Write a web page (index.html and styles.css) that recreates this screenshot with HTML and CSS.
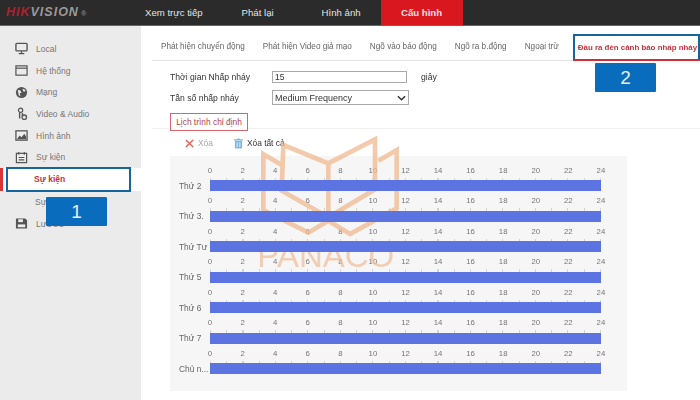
FILE: index.html
```html
<!DOCTYPE html>
<html lang="vi">
<head>
  <meta charset="UTF-8" />
  <title>Cấu hình - Sự kiện</title>
  <link rel="stylesheet" href="styles.css">
</head>
<body>

<div class="page">
  <header class="topbar">
    <div class="logo"><span class="logo-hik">HIK</span><span class="logo-vision">VISION</span><span class="logo-reg">®</span></div>
    <nav class="topnav">
      <a class="topnav-item nav-live">Xem trực tiếp</a>
      <a class="topnav-item nav-play">Phát lại</a>
      <a class="topnav-item nav-image">Hình ảnh</a>
      <a class="topnav-item nav-config active">Cấu hình</a>
    </nav>
  </header>

  <div class="content">
    <aside class="sidebar">
      <div class="side-item">
        <svg class="side-icon" viewBox="0 0 14 14"><rect x="1" y="1.5" width="12" height="8" rx="1" fill="none" stroke="#555" stroke-width="1.5"/><path d="M4 12.5h6M7 10v2" stroke="#555" stroke-width="1.5"/></svg>
        <span>Local</span>
      </div>
      <div class="side-item">
        <svg class="side-icon" viewBox="0 0 14 14"><rect x="1" y="2" width="12" height="10" fill="none" stroke="#555" stroke-width="1.3"/><path d="M1 4.5h12" stroke="#555" stroke-width="1.3"/></svg>
        <span>Hệ thống</span>
      </div>
      <div class="side-item">
        <svg class="side-icon" viewBox="0 0 14 14"><circle cx="7" cy="7" r="6" fill="#555"/><path d="M3 4l3 1 1 2-2 1 1 3-2-1zM8 3l3 1 0 2-2 0z" fill="#eee"/></svg>
        <span>Mạng</span>
      </div>
      <div class="side-item">
        <svg class="side-icon" viewBox="0 0 14 14"><circle cx="6" cy="3.5" r="2.3" fill="none" stroke="#555" stroke-width="1.3"/><path d="M5 6v6.5M8 6.5v3" stroke="#555" stroke-width="1.5"/><circle cx="10" cy="11" r="2.4" fill="none" stroke="#555" stroke-width="1.4"/></svg>
        <span>Video &amp; Audio</span>
      </div>
      <div class="side-item">
        <svg class="side-icon" viewBox="0 0 14 14"><rect x="1" y="2" width="12" height="10" fill="#eee" stroke="#555" stroke-width="1.4"/><path d="M2 11l3-4 2 2 3-4 2 3v3z" fill="#555"/></svg>
        <span>Hình ảnh</span>
      </div>
      <div class="side-item">
        <svg class="side-icon" viewBox="0 0 14 14"><rect x="1.5" y="2.5" width="11" height="10" fill="none" stroke="#555" stroke-width="1.3"/><path d="M4 1v3M10 1v3M4 7h6M4 9.5h6" stroke="#555" stroke-width="1.2"/></svg>
        <span>Sự kiện</span>
      </div>
      <div class="side-item selected">
        <div class="selected-box">Sự kiện</div>
      </div>
      <div class="side-item sub">
        <span>Sự kiện</span>
      </div>
      <div class="side-item">
        <svg class="side-icon" viewBox="0 0 14 14"><path d="M1 1.5h10l2 2v9H1z" fill="#555"/><rect x="3.5" y="2.5" width="5" height="3" fill="#eee"/><rect x="3" y="8" width="8" height="3" fill="#eee"/></svg>
        <span>Lưu trữ</span>
      </div>
      <div class="callout callout-1">1</div>
    </aside>

    <main class="main">
      <div class="tabs">
        <a class="tab">Phát hiện chuyển động</a>
        <a class="tab">Phát hiện Video giả mạo</a>
        <a class="tab">Ngõ vào báo động</a>
        <a class="tab">Ngõ ra b.động</a>
        <a class="tab">Ngoại trừ</a>
        <a class="tab tab-active">Đầu ra đèn cảnh báo nhấp nháy</a>
      </div>
      <div class="callout callout-2">2</div>

      <div class="form-row row-time">
        <label class="form-label">Thời gian Nhấp nháy</label>
        <div class="fake-input">15</div>
        <span class="unit">giây</span>
      </div>
      <div class="form-row row-freq">
        <label class="form-label">Tần số nhấp nháy</label>
        <div class="fake-select">
          <span>Medium Frequency</span>
          <svg class="chevron" viewBox="0 0 10 6"><path d="M1 1l4 4 4-4" fill="none" stroke="#333" stroke-width="1.6"/></svg>
        </div>
      </div>
      <div class="schedule-head">
        <button class="schedule-btn" type="button">Lịch trình chỉ định</button>
      </div>

      <div class="toolbar">
        <span class="tool tool-off">
          <svg class="tool-icon" viewBox="0 0 10 10"><path d="M1 1l8 8M9 1l-8 8" stroke="#e0605a" stroke-width="1.6"/></svg>
          Xóa
        </span>
        <span class="tool">
          <svg class="tool-icon trash" viewBox="0 0 10 12"><path d="M1 3h8v8.5H1z" fill="#7fb8df"/><path d="M0 2h10M3.5 1h3" stroke="#7fb8df" stroke-width="1.2"/><path d="M3.5 4.5v5.5M6.5 4.5v5.5" stroke="#e8f2f9" stroke-width="1"/></svg>
          Xóa tất cả
        </span>
      </div>

      <div class="chart">
        <div class="day">
          <div class="day-name">Thứ 2</div>
          <div class="track">
            <div class="scale"><span>0</span><span>2</span><span>4</span><span>6</span><span>8</span><span>10</span><span>12</span><span>14</span><span>16</span><span>18</span><span>20</span><span>22</span><span>24</span></div>
            <div class="ticks"></div>
            <div class="bar"></div>
          </div>
        </div>
        <div class="day">
          <div class="day-name">Thứ 3.</div>
          <div class="track">
            <div class="scale"><span>0</span><span>2</span><span>4</span><span>6</span><span>8</span><span>10</span><span>12</span><span>14</span><span>16</span><span>18</span><span>20</span><span>22</span><span>24</span></div>
            <div class="ticks"></div>
            <div class="bar"></div>
          </div>
        </div>
        <div class="day">
          <div class="day-name">Thứ Tư</div>
          <div class="track">
            <div class="scale"><span>0</span><span>2</span><span>4</span><span>6</span><span>8</span><span>10</span><span>12</span><span>14</span><span>16</span><span>18</span><span>20</span><span>22</span><span>24</span></div>
            <div class="ticks"></div>
            <div class="bar"></div>
          </div>
        </div>
        <div class="day">
          <div class="day-name">Thứ 5</div>
          <div class="track">
            <div class="scale"><span>0</span><span>2</span><span>4</span><span>6</span><span>8</span><span>10</span><span>12</span><span>14</span><span>16</span><span>18</span><span>20</span><span>22</span><span>24</span></div>
            <div class="ticks"></div>
            <div class="bar"></div>
          </div>
        </div>
        <div class="day">
          <div class="day-name">Thứ 6</div>
          <div class="track">
            <div class="scale"><span>0</span><span>2</span><span>4</span><span>6</span><span>8</span><span>10</span><span>12</span><span>14</span><span>16</span><span>18</span><span>20</span><span>22</span><span>24</span></div>
            <div class="ticks"></div>
            <div class="bar"></div>
          </div>
        </div>
        <div class="day">
          <div class="day-name">Thứ 7</div>
          <div class="track">
            <div class="scale"><span>0</span><span>2</span><span>4</span><span>6</span><span>8</span><span>10</span><span>12</span><span>14</span><span>16</span><span>18</span><span>20</span><span>22</span><span>24</span></div>
            <div class="ticks"></div>
            <div class="bar"></div>
          </div>
        </div>
        <div class="day">
          <div class="day-name">Chủ n...</div>
          <div class="track">
            <div class="scale"><span>0</span><span>2</span><span>4</span><span>6</span><span>8</span><span>10</span><span>12</span><span>14</span><span>16</span><span>18</span><span>20</span><span>22</span><span>24</span></div>
            <div class="ticks"></div>
            <div class="bar"></div>
          </div>
        </div>
      </div>
    </main>
  </div>

  <!-- watermark, sits under the bars but over the rest -->
  <svg class="watermark" viewBox="0 0 540 450">
    <g fill="none" stroke="#efb98f" stroke-width="14" stroke-linejoin="miter">
      <path d="M155 105L100 72V240L235 308L295 272L360 312L500 235V60L445 92"/>
      <path d="M160 45L295 100L435 28V178L295 262L155 182Z"/>
      <path d="M295 100V262"/>
    </g>
    <text class="watermark-text" x="82" y="410">PANACO</text>
  </svg>
</div>

</body>
</html>
```
FILE: styles.css
```css
* {
  box-sizing: border-box;
}
html, body {
  margin: 0;
  background: white;
}
body {
  width: 700px;
  height: 400px;
  overflow: hidden;
  font-family: "Liberation Sans", Arial, sans-serif;
  color: #444;
}
.page {
  position: relative;
  width: 700px;
  height: 400px;
  filter: blur(0.55px);
}

/* top bar */
.topbar {
  display: flex;
  height: 26px;
  background: #2b2b2b;
  border-bottom: 1px solid #666;
}
.logo {
  width: 145px;
  padding: 5px 0 0 6px;
  font-size: 12.5px;
  font-weight: 700;
  font-style: italic;
  letter-spacing: 1px;
}
.logo-hik {
  color: #b3202c;
}
.logo-vision {
  color: #9a9a9a;
}
.logo-reg {
  margin-left: 2px;
  font-size: 7px;
  color: #888;
}
.topnav {
  display: flex;
  color: #e4e4e4;
  font-size: 9.6px;
  white-space: nowrap;
}
.topnav-item {
  line-height: 25px;
  text-align: center;
}
.nav-live {
  margin-right: 39px;
}
.nav-play {
  margin-right: 48px;
}
.nav-image {
  margin-right: 20px;
}
.nav-config {
  width: 82px;
}
.active {
  background: #d8171f;
  color: #f4e0e0;
  font-weight: 700;
}

.content {
  display: flex;
  height: 374px;
}

/* sidebar */
.sidebar {
  position: relative;
  flex: none;
  width: 141px;
  padding-top: 12px;
  background: #ebebeb;
  font-size: 8.5px;
  color: #777;
}
.side-item {
  display: flex;
  align-items: center;
  height: 21.7px;
  padding-left: 15px;
}
.side-icon {
  width: 13px;
  height: 13px;
  margin-right: 8px;
}
.side-item.selected {
  height: 23px;
  margin-top: 0;
  padding: 0;
  background: white;
  border-left: 3px solid #d8343c;
}
.selected-box {
  width: 125px;
  height: 25px;
  margin-left: 3px;
  padding-left: 26px;
  border: 2px solid #15669f;
  background: white;
  line-height: 21px;
  font-weight: 700;
  color: #c8323c;
}
.side-item.sub {
  padding-left: 35px;
  white-space: nowrap;
  overflow: hidden;
}

/* blue number tags */
.callout {
  position: absolute;
  z-index: 3;
  width: 61px;
  height: 29px;
  border-radius: 1px;
  background: #0a6cbc;
  color: #e4eef8;
  font-size: 19px;
  line-height: 29px;
  text-align: center;
}
.callout-1 {
  left: 46px;
  top: 171px;
}
.callout-2 {
  left: 454px;
  top: 37px;
}

/* main */
.main {
  position: relative;
  flex: 1;
  min-width: 0;
  padding-left: 11px;
}
.tabs {
  display: flex;
  align-items: flex-end;
  height: 35px;
  padding-left: 9px;
  border-bottom: 1px solid #e2e2e2;
  font-size: 8.2px;
  color: #666;
  white-space: nowrap;
}
.tab {
  margin-right: 18px;
  padding-bottom: 9px;
}
.tab-active {
  flex: 1;
  min-width: 0;
  margin: 0 0 -1px -4px;
  padding: 0 0 0 3px;
  height: 27px;
  border: 2px solid #15669f;
  border-bottom: 2px solid #cf2f38;
  line-height: 23px;
  font-size: 7.9px;
  font-weight: 700;
  color: #c8323c;
}
.form-row {
  display: flex;
  align-items: center;
  padding-left: 18px;
  font-size: 8.6px;
  color: #333;
}
.row-time {
  height: 12px;
  margin-top: 10px;
}
.row-freq {
  height: 15px;
  margin-top: 7px;
}
.form-label {
  width: 102px;
}
.fake-input {
  width: 135px;
  height: 12px;
  padding-left: 2px;
  border: 1px solid #aaa;
  font-size: 8.6px;
  line-height: 10px;
}
.unit {
  margin-left: 14px;
}
.fake-select {
  display: flex;
  align-items: center;
  justify-content: space-between;
  width: 137px;
  height: 15px;
  padding: 0 2px;
  border: 1px solid #aaa;
  font-size: 9px;
}
.chevron {
  width: 9px;
  height: 6px;
}
.schedule-head {
  height: 18px;
  margin-top: 6px;
  padding-left: 18px;
  border-bottom: 1px solid #f0f0f0;
}
.schedule-btn {
  position: relative;
  width: 78px;
  height: 18px;
  padding: 0;
  border: 1px solid #d9656c;
  background: white;
  font-family: inherit;
  font-size: 8.4px;
  color: #b5444c;
}
.toolbar {
  display: flex;
  height: 27px;
  padding: 8px 0 0 33px;
  font-size: 8.4px;
  color: #333;
}
.tool {
  display: flex;
  align-items: center;
  height: 12px;
  margin-right: 21px;
}
.tool-off {
  color: #aaa;
}
.tool-icon {
  width: 9px;
  height: 9px;
  margin-right: 4px;
}
.tool-icon.trash {
  width: 9px;
  height: 11px;
}

/* schedule chart */
.chart {
  width: 457px;
  height: 235px;
  margin-left: 18px;
  padding: 4.5px 0 0 9px;
  background: #f6f6f6;
}
.day {
  display: flex;
  height: 30.5px;
}
.day-name {
  width: 31px;
  padding-top: 19px;
  font-size: 8.4px;
  line-height: 12px;
  color: #666;
  white-space: nowrap;
}
.track {
  width: 391px;
}
.scale {
  display: flex;
  justify-content: space-between;
  height: 17px;
  padding-top: 5px;
  font-size: 7.8px;
  line-height: 10px;
  color: #777;
}
.scale span {
  display: flex;
  justify-content: center;
  width: 0;
}
.ticks {
  height: 2.5px;
  background: repeating-linear-gradient(to right, #d4d4d4 0, #d4d4d4 1px, transparent 1px, transparent 16.25px);
}
.bar {
  position: relative;
  z-index: 2;
  height: 11px;
  background: #5b74e2;
}

/* logo stamped over the page */
.watermark {
  position: absolute;
  left: 230px;
  top: 130px;
  z-index: 1;
  width: 180px;
  height: 150px;
  opacity: 0.75;
  overflow: visible;
}
.watermark-text {
  font-size: 99px;
  fill: #efc09c;
}
```
